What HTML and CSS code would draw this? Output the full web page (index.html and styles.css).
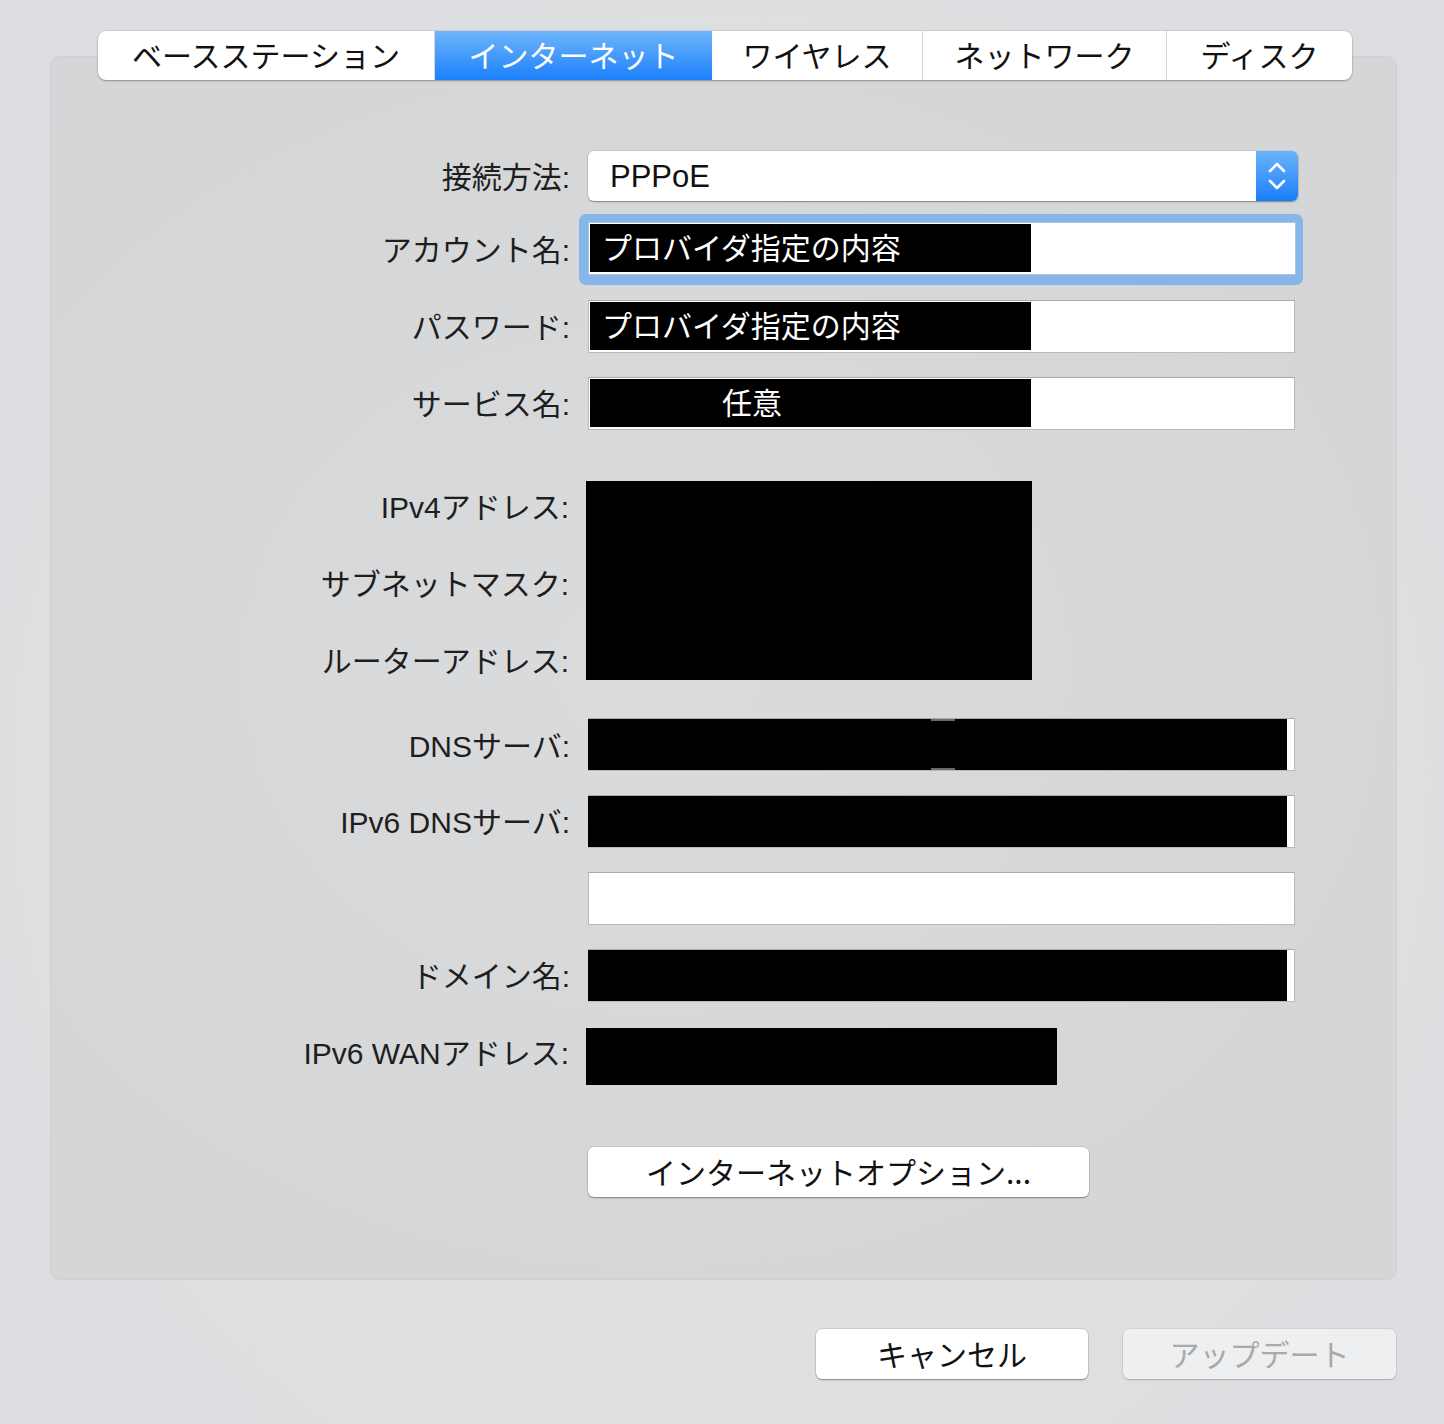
FILE: index.html
```html
<!DOCTYPE html>
<html lang="ja">
<head>
<meta charset="utf-8">
<title>インターネット</title>
<link rel="stylesheet" href="styles.css">
</head>
<body>
<div class="window">
  <div class="tabs">
    <div class="tab t1">ベースステーション</div>
    <div class="tab t2 active">インターネット</div>
    <div class="tab t3">ワイヤレス</div>
    <div class="tab t4">ネットワーク</div>
    <div class="tab t5">ディスク</div>
  </div>
  <div class="panel">
    <div class="row row-popup">
      <div class="label">接続方法:</div>
      <div class="popup">
        <span class="popup-text">PPPoE</span>
        <span class="stepper">
          <svg width="22" height="34" viewBox="0 0 22 34"><path d="M4 12 L11 5 L18 12" fill="none" stroke="#fff" stroke-width="2.6" stroke-linecap="round" stroke-linejoin="round"/><path d="M4 22 L11 29 L18 22" fill="none" stroke="#fff" stroke-width="2.6" stroke-linecap="round" stroke-linejoin="round"/></svg>
        </span>
      </div>
    </div>
    <div class="row">
      <div class="label">アカウント名:</div>
      <div class="focus"><div class="field"><div class="mask">プロバイダ指定の内容</div></div></div>
    </div>
    <div class="row">
      <div class="label">パスワード:</div>
      <div class="field"><div class="mask">プロバイダ指定の内容</div></div>
    </div>
    <div class="row">
      <div class="label">サービス名:</div>
      <div class="field"><div class="mask mask-center">任意</div></div>
    </div>

    <div class="ipv4">
      <div class="label l1">IPv4アドレス:</div>
      <div class="label l2">サブネットマスク:</div>
      <div class="label l3">ルーターアドレス:</div>
      <div class="block"></div>
    </div>

    <div class="row row-dns">
      <div class="label">DNSサーバ:</div>
      <div class="field"><div class="mask mask-full"><span class="notch"></span></div></div>
    </div>
    <div class="row">
      <div class="label">IPv6 DNSサーバ:</div>
      <div class="field"><div class="mask mask-full"></div></div>
    </div>
    <div class="row">
      <div class="label"></div>
      <div class="field"></div>
    </div>
    <div class="row">
      <div class="label">ドメイン名:</div>
      <div class="field"><div class="mask mask-full"></div></div>
    </div>
    <div class="row row-wan">
      <div class="label">IPv6 WANアドレス:</div>
      <div class="wan"></div>
    </div>
    <div class="row row-btn">
      <div class="label"></div>
      <div class="btn-wrap"><button class="btn btn-options">インターネットオプション...</button></div>
    </div>
  </div>
  <div class="footer">
    <button class="btn btn-cancel">キャンセル</button>
    <button class="btn btn-update" disabled>アップデート</button>
  </div>
</div>
</body>
</html>
```
FILE: styles.css
```css
html, body {
  margin: 0;
  padding: 0;
}
body {
  width: 1444px;
  height: 1424px;
  background: radial-gradient(ellipse at 50% 55%, #e4e5e7 0%, #dedfe1 60%, #dcdde0 100%);
  font-family: "Liberation Sans", "Noto Sans CJK JP", sans-serif;
  color: #1c1c1c;
  overflow: hidden;
}
.window {
  padding-top: 31px;
  display: flex;
  flex-direction: column;
}
.tabs {
  position: relative;
  z-index: 2;
  align-self: flex-start;
  margin-left: 98px;
  width: 1254px;
  height: 49px;
  display: flex;
  background: #fff;
  border-radius: 8px;
  box-shadow: 0 1px 2px rgba(0,0,0,0.3), 0 0 0 0.5px rgba(0,0,0,0.12);
  overflow: hidden;
}
.tab {
  height: 49px;
  padding-bottom: 4px;
  display: flex;
  align-items: center;
  justify-content: center;
  font-family: "Noto Sans CJK JP", sans-serif;
  font-size: 30px;
  color: #111;
  border-right: 1px solid #d6d6d6;
  box-sizing: border-box;
}
.tab:last-child { border-right: none; }
.t1 { width: 337px; }
.t2 { width: 277px; }
.t3 { width: 211px; }
.t4 { width: 244px; }
.t5 { width: 185px; }
.tab.active {
  background: linear-gradient(#6fb5fa, #1b80fb);
  color: #fff;
  border-right: none;
}
.panel {
  margin-top: -24px;
  margin-left: 50px;
  width: 1347px;
  height: 1224px;
  box-sizing: border-box;
  background: radial-gradient(ellipse at 45% 50%, #dadbdd 0%, #d5d6d8 70%);
  border: 1px solid #cfd0d2;
  border-radius: 10px;
  padding-top: 94px;
  display: flex;
  flex-direction: column;
}
.row {
  display: grid;
  grid-template-columns: 518px 707px;
  column-gap: 19px;
  height: 53px;
  margin-bottom: 24px;
  align-items: center;
}
.label {
  text-align: right;
  font-family: "Liberation Sans", "Noto Sans CJK JP", sans-serif;
  font-size: 30px;
  line-height: 40px;
  color: #1e1e1e;
  white-space: nowrap;
  margin-right: -1px;
  padding-top: 2px;
}
.row-popup {
  height: 50px;
  margin-bottom: 22px;
  grid-template-columns: 518px 710px;
}
.row-popup .label { padding-top: 3px; }
.popup {
  height: 50px;
  box-sizing: border-box;
  background: #fff;
  border-radius: 6px;
  box-shadow: 0 1px 1.5px rgba(0,0,0,0.35), 0 0 0 0.5px rgba(0,0,0,0.12);
  display: flex;
  align-items: center;
  overflow: hidden;
}
.popup-text {
  flex: 1;
  padding-left: 22px;
  padding-top: 2px;
  font-family: "Liberation Sans", "Noto Sans CJK JP", sans-serif;
  font-size: 31px;
  color: #111;
}
.stepper {
  width: 42px;
  height: 50px;
  background: linear-gradient(#6cb3fa, #1a7ffb);
  display: flex;
  align-items: center;
  justify-content: center;
}
.field {
  height: 53px;
  box-sizing: border-box;
  background: #fff;
  border: 1px solid #b9babc;
  border-top-color: #a9aaac;
  padding: 1px;
  position: relative;
}
.focus {
  margin: -9px -8px -9px -9px;
  padding: 8px 7px 8px 9px;
  background: #86b6e8;
  border-radius: 7px;
  box-sizing: border-box;
  height: 71px;
}
.focus .field {
  border-color: #aac4e0;
}
.mask {
  width: 441px;
  height: 48px;
  background: #000;
  color: #fff;
  font-family: "Noto Sans CJK JP", sans-serif;
  font-size: 30px;
  line-height: 44px;
  padding-left: 12px;
  box-sizing: border-box;
  white-space: nowrap;
}
.mask-center { padding-left: 132px; }
.mask-full {
  width: 699px;
  margin-left: -2px;
  margin-top: -1px;
  height: 51px;
  position: relative;
}
.notch {
  position: absolute;
  left: 343px;
  top: 0;
  width: 24px;
  height: 2px;
  background: #6a6a6a;
  box-shadow: 0 49px 0 #6a6a6a;
}
.ipv4 {
  display: grid;
  grid-template-columns: 516px 446px;
  grid-template-rows: 53px 53px 53px;
  row-gap: 24px;
  column-gap: 19px;
  margin-top: 27px;
  margin-bottom: 30px;
  align-items: center;
}
.l1 { grid-row: 1; grid-column: 1; }
.l2 { grid-row: 2; grid-column: 1; }
.l3 { grid-row: 3; grid-column: 1; }
.ipv4 .label { margin-right: -2px; padding-top: 0; }
.block {
  grid-row: 1 / span 3;
  grid-column: 2;
  align-self: start;
  height: 199px;
  background: #000;
}
.row-dns .label { padding-top: 5px; }
.row-wan {
  height: 57px;
  margin-top: 2px;
  margin-bottom: 62px;
  grid-template-columns: 516px 471px;
  column-gap: 19px;
}
.row-wan .label { margin-right: -2px; padding-top: 0; padding-bottom: 6px; }
.wan {
  height: 57px;
  background: #000;
}
.row-btn {
  height: 50px;
  margin-bottom: 0;
}
.btn-wrap { display: flex; }
.btn {
  font-family: "Noto Sans CJK JP", sans-serif;
  font-size: 30px;
  color: #111;
  background: #fff;
  border: none;
  border-radius: 6px;
  box-shadow: 0 1px 1.5px rgba(0,0,0,0.35), 0 0 0 0.5px rgba(0,0,0,0.14);
  height: 50px;
  padding: 0 0 3px 0;
  display: flex;
  align-items: center;
  justify-content: center;
  line-height: 1;
}
.btn-options { width: 501px; }
.footer {
  display: flex;
  justify-content: flex-end;
  gap: 35px;
  margin-top: 49px;
  margin-right: 48px;
}
.btn-cancel { width: 272px; }
.btn-update {
  width: 273px;
  background: #eeeff0;
  color: #a9a9aa;
  box-shadow: 0 1px 1.5px rgba(0,0,0,0.2), 0 0 0 0.5px rgba(0,0,0,0.1);
}
```
